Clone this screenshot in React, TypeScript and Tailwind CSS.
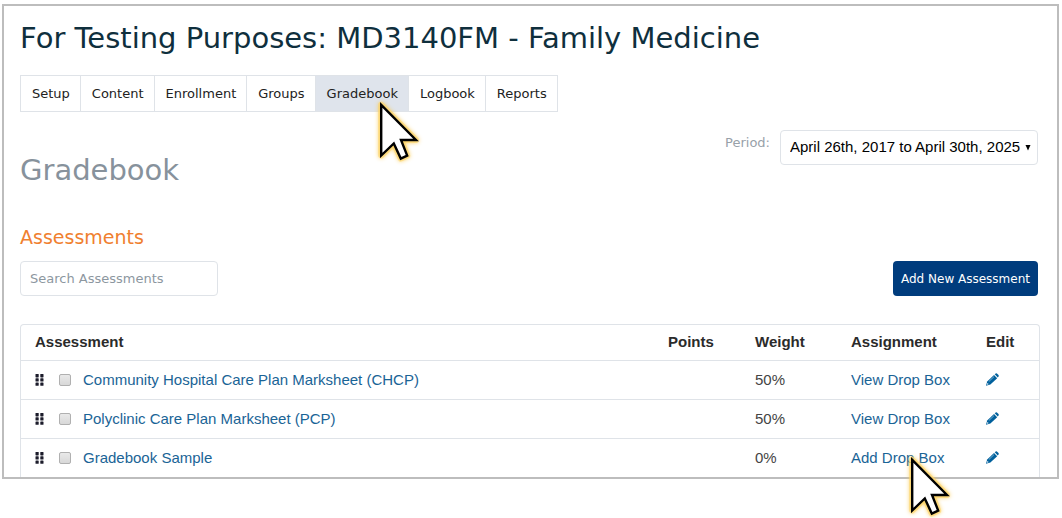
const tabs = [
  "Setup",
  "Content",
  "Enrollment",
  "Groups",
  "Gradebook",
  "Logbook",
  "Reports",
];

const assessments = [
  {
    name: "Community Hospital Care Plan Marksheet (CHCP)",
    weight: "50%",
    action: "View Drop Box",
  },
  {
    name: "Polyclinic Care Plan Marksheet (PCP)",
    weight: "50%",
    action: "View Drop Box",
  },
  { name: "Gradebook Sample", weight: "0%", action: "Add Drop Box" },
];

function Pointer({ className }: { className: string }) {
  return (
    <svg
      className={`absolute z-10 pointer-events-none overflow-visible drop-shadow-[0_0_2px_#fbc94a] ${className}`}
      width="40"
      height="60"
      viewBox="0 0 40 60"
      aria-hidden="true"
    >
      <path
        d="M1.2 2.8 L36 38 L21 38 L27.2 53.6 L20.800 56.600 L13.800 41.500 L1.2 53.500 Z"
        fill="#fff"
        stroke="#fdd66b"
        strokeWidth="6"
        strokeOpacity="0.6"
        strokeLinejoin="round"
      />
      <path
        d="M1.2 2.8 L36 38 L21 38 L27.2 53.6 L20.800 56.600 L13.800 41.500 L1.2 53.500 Z"
        fill="#fff"
        stroke="#000"
        strokeWidth="2.4"
      />
    </svg>
  );
}

function Grip() {
  return (
    <svg width="9" height="12" viewBox="0 0 9 12" fill="#1c1c2b" aria-hidden="true">
      <rect x="0.500" y="0" width="3.200" height="3.400" rx="0.6" />
      <rect x="5.300" y="0" width="3.200" height="3.400" rx="0.6" />
      <rect x="0.500" y="4.200" width="3.200" height="3.400" rx="0.6" />
      <rect x="5.300" y="4.200" width="3.200" height="3.400" rx="0.6" />
      <rect x="0.500" y="8.400" width="3.200" height="3.400" rx="0.6" />
      <rect x="5.300" y="8.400" width="3.200" height="3.400" rx="0.6" />
    </svg>
  );
}

function Pencil() {
  return (
    <svg width="13" height="13" viewBox="0 0 13 13" fill="#00609c" aria-hidden="true">
      <path d="M0 12.800 L1.2 8.600 L8 2 L11.2 5.200 L4.400 11.600 Z" />
      <path d="M8.700 1.300 L9.700 0.4 Q10.300 0 10.900 0.500 L12.500 2.100 Q13 2.700 12.600 3.300 L11.800 4.500 Z" />
      <path d="M2.800 8.600 L8 3.600" stroke="#8fc3e0" strokeWidth="0.8" />
      <circle cx="1.700" cy="11" r="0.7" fill="#fff" />
    </svg>
  );
}

function AssessmentTable() {
  return (
    <div className="rounded-t border border-b-0 border-[#dfe3e8]">
      <table className="w-full table-fixed text-left text-[15px] leading-5 font-['Liberation_Sans',Arial,sans-serif]">
        <thead>
          <tr className="h-[35px] text-[#2b2b2b]">
            <th className="px-3.5">Assessment</th>
            <th className="w-[87px] px-3.5">Points</th>
            <th className="w-24 px-3.5">Weight</th>
            <th className="w-[135px] px-3.5">Assignment</th>
            <th className="w-[67px] px-3.5">Edit</th>
          </tr>
        </thead>
        <tbody>
          {assessments.map((item) => (
            <tr key={item.name} className="h-[39px] border-t border-[#dfe3e8]">
              <td className="px-3.5">
                <div className="flex items-center">
                  <Grip />
                  <input
                    type="checkbox"
                    aria-label={item.name}
                    className="ml-[15px] mr-3 size-3 appearance-none rounded-xs border border-[#b0b0b0] bg-linear-to-b from-[#e9e9e9] to-[#d8d8d8] checked:bg-[#1a6496]"
                  />
                  <a href="#" className="text-[#1a6496]">
                    {item.name}
                  </a>
                </div>
              </td>
              <td className="px-3.5"></td>
              <td className="px-3.5 text-[#444]">{item.weight}</td>
              <td className="px-3.5">
                <a href="#" className="relative text-[#1a6496]">
                  {item.action}
                  {item.action === "Add Drop Box" && (
                    <Pointer className="left-[60px] top-2" />
                  )}
                </a>
              </td>
              <td className="px-3.5">
                <a href="#" aria-label={`Edit ${item.name}`} className="flex">
                  <Pencil />
                </a>
              </td>
            </tr>
          ))}
        </tbody>
      </table>
    </div>
  );
}

export default function App() {
  return (
    <div className="bg-white px-0.5 pt-1 pb-10 font-['DejaVu_Sans',Verdana,sans-serif]">
      <main className="mr-px border-2 border-[#bdbdbd] pl-4 pr-[17px] pt-3">
        <h1 className="text-[29px] leading-10 text-[#0f2f3d]">
          For Testing Purposes: MD3140FM - Family Medicine
        </h1>

        <nav className="mt-[17px] flex">
          <div className="flex border border-[#dfe3e8] divide-x divide-[#dfe3e8]">
            {tabs.map((tab) => (
              <a
                key={tab}
                href="#"
                className={`relative pl-[11px] pr-2.5 text-[13px] leading-[35px] text-[#222] ${
                  tab === "Gradebook" ? "bg-[#dfe4ec]" : ""
                }`}
              >
                {tab}
                {tab === "Gradebook" && <Pointer className="left-16 top-[26px]" />}
              </a>
            ))}
          </div>
        </nav>

        <div className="mt-[18px] mr-0.5 flex items-start justify-between">
          <h2 className="pt-5 text-[29px] leading-10 text-[#87929c]">Gradebook</h2>
          <div className="flex items-start">
            <label htmlFor="period" className="pr-2.5 pt-1 text-[13px] leading-[18px] text-[#98a1a9]">
              Period:
            </label>
            <div className="relative">
              <select
                id="period"
                className="h-[35px] appearance-none rounded border border-[#dfe3e8] bg-white pl-[9px] pr-4 text-[15px] text-black font-['Liberation_Sans',Arial,sans-serif]"
              >
                <option>April 26th, 2017 to April 30th, 2025</option>
              </select>
              <svg className="pointer-events-none absolute right-[7px] top-[15px]" width="6" height="6" aria-hidden="true">
                <path d="M0.500 0 H5.500 L3 5.500 Z" />
              </svg>
            </div>
          </div>
        </div>

        <h3 className="mt-8 text-[19px] leading-[30px] text-[#f0802f]">Assessments</h3>
        <div className="mt-[9px] mr-0.5 flex justify-between">
          <input
            type="text"
            aria-label="Search Assessments"
            placeholder="Search Assessments"
            className="h-[35px] w-[198px] rounded border border-[#dfe3e8] px-[9px] text-[13px] placeholder:text-[#8d979f]"
          />
          <button type="button" className="h-[35px] rounded bg-[#003c7d] px-2 text-xs text-white">
            Add New Assessment
          </button>
        </div>

        <div className="mt-7">
          <AssessmentTable />
        </div>
      </main>
    </div>
  );
}
